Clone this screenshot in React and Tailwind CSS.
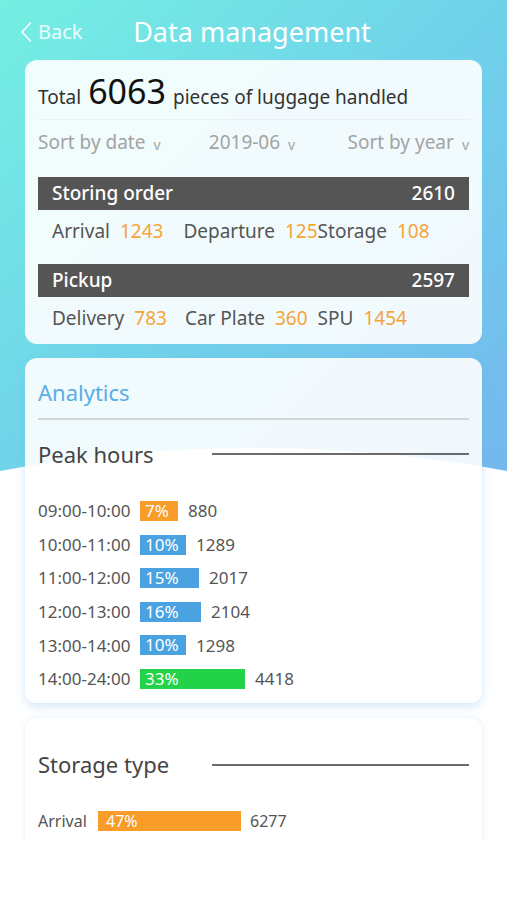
const peak = [
  { time: '09:00-10:00', pct: '7%', w: 38, color: 'bg-[#f89c2a]', count: 880 },
  { time: '10:00-11:00', pct: '10%', w: 46, color: 'bg-[#4aa3e0]', count: 1289 },
  { time: '11:00-12:00', pct: '15%', w: 59, color: 'bg-[#4aa3e0]', count: 2017 },
  { time: '12:00-13:00', pct: '16%', w: 61, color: 'bg-[#4aa3e0]', count: 2104 },
  { time: '13:00-14:00', pct: '10%', w: 46, color: 'bg-[#4aa3e0]', count: 1298 },
  { time: '14:00-24:00', pct: '33%', w: 105, color: 'bg-[#22d34a]', count: 4418 },
]

function Chevron() {
  return (
    <svg width="13" height="22" viewBox="0 0 13 22" fill="none">
      <path d="M11 1.5 L2 11 L11 20.5" stroke="rgba(255,255,255,0.85)" strokeWidth="1.8" />
    </svg>
  )
}

function Bar({ label, value }) {
  return (
    <div className="flex items-center justify-between h-[33px] bg-[#555555] px-[14px] text-white text-[19px] font-medium">
      <span>{label}</span>
      <span>{value}</span>
    </div>
  )
}

function SectionTitle({ children }) {
  return (
    <div className="flex items-center h-[30px]">
      <span className="w-[174px] text-[22px] text-[#444]">{children}</span>
      <span className="flex-1 h-[2px] bg-[#6b6b6b]" />
    </div>
  )
}

function Caret() {
  return <span className="text-[14px] ml-[8px] relative top-[1px]">v</span>
}

export default function App() {
  return (
    <div className="relative min-h-[900px] overflow-hidden bg-white" style={{ fontFamily: '"Noto Sans", "Noto Sans CJK SC", sans-serif' }}>
      <div className="absolute inset-x-0 top-0 h-[500px] bg-gradient-to-br from-[#74efe2] via-[#70d2ea] to-[#74b6ee]" />
      <div className="absolute left-[-350px] w-[1207px] top-[448px] h-[500px] rounded-[50%] bg-white" />

      <div className="relative">
        <header className="flex items-center h-[64px] px-[20px]">
          <div className="flex items-center gap-[5px] w-[100px] text-white/85 text-[20px]">
            <Chevron />
            <span>Back</span>
          </div>
          <h1 className="flex-1 text-center text-white text-[27px] pr-[100px] -ml-[3px]">Data management</h1>
        </header>

        <section className="mx-[25px] -mt-[4px] rounded-[12px] bg-white/90 px-[13px] pb-[5px]">
          <div className="flex items-baseline h-[60px] pt-[6px] text-[19px] text-[#333] border-b border-[#eaf1f5]">
            <span>Total</span>
            <span className="text-[34px] mx-[7px] text-[#111]">6063</span>
            <span>pieces of luggage handled</span>
          </div>
          <div className="flex items-center justify-between h-[44px] text-[19px] text-[#a3a3a3]">
            <span>Sort by date<Caret /></span>
            <span className="mr-[4px]">2019-06<Caret /></span>
            <span>Sort by year<Caret /></span>
          </div>
          <div className="mt-[13px]">
            <Bar label="Storing order" value="2610" />
          </div>
          <div className="flex items-center h-[42px] px-[14px] text-[19px] text-[#555]">
            <span>Arrival</span>
            <span className="ml-[10px] text-[#f5a43a]">1243</span>
            <span className="ml-[20px]">Departure</span>
            <span className="ml-[10px] text-[#f5a43a]">125</span>
            <span>Storage</span>
            <span className="ml-[10px] text-[#f5a43a]">108</span>
          </div>
          <div className="mt-[12px]">
            <Bar label="Pickup" value="2597" />
          </div>
          <div className="flex items-center h-[42px] px-[14px] text-[19px] text-[#555]">
            <span>Delivery</span>
            <span className="ml-[10px] text-[#f5a43a]">783</span>
            <span className="ml-[18px]">Car Plate</span>
            <span className="ml-[10px] text-[#f5a43a]">360</span>
            <span className="ml-[10px]">SPU</span>
            <span className="ml-[10px] text-[#f5a43a]">1454</span>
          </div>
        </section>

        <section className="mx-[25px] mt-[14px] rounded-[12px] bg-white/90 px-[13px] pt-[20px] pb-[14px] shadow-[0_4px_10px_rgba(120,180,230,0.3)]">
          <div className="text-[22px] text-[#5aaee6] leading-[28px]">Analytics</div>
          <div className="mt-[12px] h-[2px] bg-[#d2d6d8]" />
          <div className="mt-[19px]">
            <SectionTitle>Peak hours</SectionTitle>
          </div>
          <div className="mt-[32px] flex flex-col gap-[13.6px]">
            {peak.map((r) => (
              <div key={r.time} className="flex items-center h-[20px] text-[17px] text-[#555]">
                <span className="w-[102px]">{r.time}</span>
                <span className={`${r.color} h-[20px] pl-[5px] text-white leading-[20px]`} style={{ width: r.w }}>{r.pct}</span>
                <span className="ml-[10px]">{r.count}</span>
              </div>
            ))}
          </div>
        </section>

        <div className="mt-[9px] h-[128px] overflow-hidden px-[25px] pt-[6px]">
          <section className="h-[200px] rounded-[12px] bg-white px-[13px] pt-[32px] shadow-[0_0_6px_rgba(120,180,230,0.22)]">
            <SectionTitle>Storage type</SectionTitle>
            <div className="mt-[31px] flex items-center h-[20px] text-[16px] text-[#555]">
              <span className="w-[60px]">Arrival</span>
              <span className="bg-[#f89c2a] h-[20px] w-[143px] pl-[8px] text-white leading-[20px]">47%</span>
              <span className="ml-[9px]">6277</span>
            </div>
          </section>
        </div>
      </div>
    </div>
  )
}
